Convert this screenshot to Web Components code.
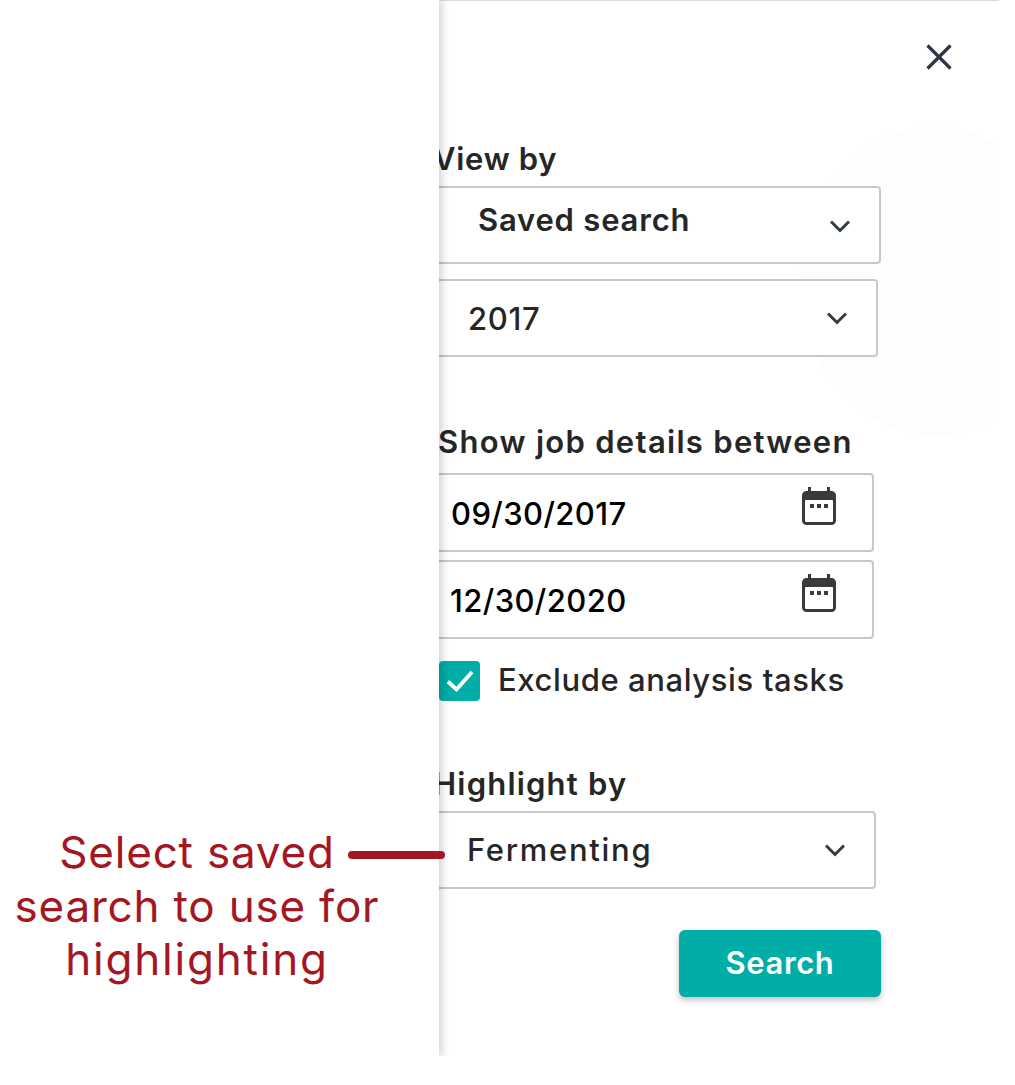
<!DOCTYPE html>
<html>
<head>
<meta charset="utf-8">
<style>
  html, body { margin: 0; padding: 0; background: #fff; }
  body { font-family: Inter, "Liberation Sans", sans-serif; color: #262626; }
</style>
</head>
<body>
<app-shell>
  <callout-panel slot="side"></callout-panel>
  <filter-panel slot="main">
    <field-label style="--gap-top:140px;--ink-left:-6px;--ls:0.7px">View by</field-label>
    <select-box style="--mt:9px;--mr:118px;--pl:37px;--weight:600;--ty:-6px;--cy:1px;--ls:0.8px" value="Saved search"></select-box>
    <select-box style="--mt:15px;--mr:121px;--pl:27px;--weight:500;--ls:0.7px" value="2017"></select-box>
    <field-label style="--gap-top:67px;--ink-left:-1px;--ls:1.3px">Show job details between</field-label>
    <date-box style="--mt:13px" value="09/30/2017"></date-box>
    <date-box style="--mt:8px;--ml:-1px" value="12/30/2020"></date-box>
    <check-row label="Exclude analysis tasks"></check-row>
    <field-label style="--gap-top:65px;--ink-left:-6px;--ls:1.2px">Highlight by</field-label>
    <select-box style="--mt:9px;--mr:123px;--pl:26px;--weight:500;--ty:-1px;--ls:1.7px" value="Fermenting"></select-box>
    <search-button>Search</search-button>
  </filter-panel>
</app-shell>

<script>
  // Chevron used by every dropdown
  const CHEVRON = `<svg width="22" height="14" viewBox="0 0 22 14" fill="none"><path d="M2 2.500 11 11.500 20 2.500" stroke="#333c42" stroke-width="3"/></svg>`;

  // Calendar glyph in the date inputs
  const CALENDAR = `<svg width="34" height="38" viewBox="0 0 34 38"><path fill="#3a3a3a" d="M6 0h3v4h16V0h3v4h1.500A4.500 4.500 0 0 1 34 8.500V33.500A4.500 4.500 0 0 1 29.500 38h-25A4.500 4.500 0 0 1 0 33.500V8.500A4.500 4.500 0 0 1 4.500 4H6z"/><rect x="3" y="13" width="28" height="22" rx="1" fill="#fff"/><rect x="8" y="17" width="4" height="4" fill="#3a3a3a"/><rect x="15" y="17" width="4" height="4" fill="#3a3a3a"/><rect x="22" y="17" width="4" height="4" fill="#3a3a3a"/></svg>`;

  class AppShell extends HTMLElement {
    constructor() {
      super();
      this.attachShadow({ mode: 'open' });
      this.shadowRoot.innerHTML = `
        <style>
          :host { display: flex; width: 999px; height: 1056px; }
          ::slotted([slot="side"]) { flex: 0 0 439px; }
          ::slotted([slot="main"]) { flex: 0 0 560px; }
        </style>
        <slot name="side"></slot>
        <slot name="main"></slot>
      `;
    }
  }

  class CalloutPanel extends HTMLElement {
    constructor() {
      super();
      this.attachShadow({ mode: 'open' });
      this.shadowRoot.innerHTML = `
        <style>
          :host {
            display: block;
            position: relative;
            z-index: 2;
            background: #fff;
            box-shadow: 3px 0 8px rgba(0, 0, 0, 0.18);
          }
          .note {
            position: absolute;
            left: 0;
            top: 826px;
            width: 394px;
            text-align: center;
            font-size: 44px;
            line-height: 53.500px;
            letter-spacing: 0.800px;
            font-weight: 400;
            color: #a41722;
          }
          .note span { letter-spacing: 1.800px; }
          .rule {
            position: absolute;
            left: 348px;
            top: 851px;
            width: 97px;
            height: 8px;
            border-radius: 4px;
            background: #a41722;
          }
        </style>
        <div class="note">Select saved<br>search to use for<br><span>highlighting</span></div>
        <div class="rule"></div>
      `;
    }
  }

  class FilterPanel extends HTMLElement {
    constructor() {
      super();
      this.attachShadow({ mode: 'open' });
      this.shadowRoot.innerHTML = `
        <style>
          :host {
            display: block;
            position: relative;
            overflow: hidden;
            box-sizing: border-box;
            height: 1056px;
            border-top: 1px solid #dcdcdc;
            background: #fff;
          }
          .blob {
            position: absolute;
            right: -70px;
            top: 125px;
            width: 270px;
            height: 310px;
            border-radius: 50%;
            background: #fdfdfd;
          }
          .close {
            position: absolute;
            left: 487px;
            top: 43px;
            width: 26px;
            height: 26px;
          }
          .body { position: relative; display: flex; flex-direction: column; }
        </style>
        <div class="blob"></div>
        <svg class="close" viewBox="0 0 26 26" fill="none"><path d="M1.500 1.500 24.500 24.500M24.500 1.500 1.500 24.500" stroke="#2f3542" stroke-width="3.200"/></svg>
        <div class="body"><slot></slot></div>
      `;
    }
  }

  class FieldLabel extends HTMLElement {
    constructor() {
      super();
      this.attachShadow({ mode: 'open' });
      this.shadowRoot.innerHTML = `
        <style>
          :host {
            display: block;
            margin-top: var(--gap-top, 0);
            margin-left: var(--ink-left, 0);
            font-size: 31px;
            line-height: 36px;
            font-weight: 600;
            letter-spacing: var(--ls, 0.3px);
            color: #262626;
            white-space: nowrap;
          }
        </style>
        <slot></slot>
      `;
    }
  }

  class SelectBox extends HTMLElement {
    constructor() {
      super();
      this.attachShadow({ mode: 'open' });
      this.shadowRoot.innerHTML = `
        <style>
          :host {
            display: block;
            margin-top: var(--mt, 0);
            margin-right: var(--mr, 120px);
            margin-left: -10px;
          }
          .box {
            box-sizing: border-box;
            height: 78px;
            display: flex;
            align-items: center;
            justify-content: space-between;
            padding: 0 0 0 calc(var(--pl, 30px) + 10px);
            border: 2px solid #c9c9c9;
            border-radius: 4px;
            background: #fff;
          }
          .value {
            font-size: 31px;
            font-weight: var(--weight, 500);
            letter-spacing: var(--ls, 0);
            color: #262626;
            transform: translateY(var(--ty, 0));
          }
          .chevron {
            display: flex;
            margin-right: 28px;
            transform: translateY(var(--cy, 0));
          }
        </style>
        <div class="box">
          <span class="value"></span>
          <span class="chevron">${CHEVRON}</span>
        </div>
      `;
      this.shadowRoot.querySelector('.value').textContent = this.getAttribute('value');
    }
  }

  class DateBox extends HTMLElement {
    constructor() {
      super();
      this.attachShadow({ mode: 'open' });
      this.shadowRoot.innerHTML = `
        <style>
          :host {
            display: block;
            margin-top: var(--mt, 0);
            margin-right: 125px;
            margin-left: -10px;
          }
          .box {
            box-sizing: border-box;
            height: 79px;
            display: flex;
            align-items: center;
            justify-content: space-between;
            padding: 0 36px 0 20px;
            border: 2px solid #c9c9c9;
            border-radius: 4px;
            background: #fff;
          }
          .value { font-size: 31px; font-weight: 500; letter-spacing: 0.400px; color: #000; transform: translate(var(--ml, 0), 1px); }
          .icon { display: flex; transform: translateY(-7px); }
        </style>
        <div class="box">
          <span class="value"></span>
          <span class="icon">${CALENDAR}</span>
        </div>
      `;
      this.shadowRoot.querySelector('.value').textContent = this.getAttribute('value');
    }
  }

  class CheckRow extends HTMLElement {
    constructor() {
      super();
      this.attachShadow({ mode: 'open' });
      this.shadowRoot.innerHTML = `
        <style>
          :host {
            display: flex;
            align-items: center;
            gap: 18px;
            margin-top: 22px;
            height: 40px;
          }
          .tick {
            box-sizing: border-box;
            width: 41px;
            height: 40px;
            border-radius: 4px;
            background: #00ada7;
            display: flex;
            align-items: center;
            justify-content: center;
          }
          .text { font-size: 31px; font-weight: 500; letter-spacing: 0.600px; color: #262626; white-space: nowrap; transform: translateY(-2px); }
        </style>
        <span class="tick">
          <svg width="30" height="24" viewBox="0 0 30 24" fill="none"><path d="M3 12.500 11.500 20.500 27 3" stroke="#fff" stroke-width="3.800"/></svg>
        </span>
        <span class="text"></span>
      `;
      this.shadowRoot.querySelector('.text').textContent = this.getAttribute('label');
    }
  }

  class SearchButton extends HTMLElement {
    constructor() {
      super();
      this.attachShadow({ mode: 'open' });
      this.shadowRoot.innerHTML = `
        <style>
          :host {
            display: flex;
            align-items: center;
            justify-content: center;
            box-sizing: border-box;
            align-self: flex-start;
            margin: 41px 0 0 240px;
            width: 202px;
            height: 67px;
            padding-bottom: 2px;
            border-radius: 6px;
            background: #00ada7;
            box-shadow: 0 3px 6px rgba(0, 0, 0, 0.25);
            color: #fff;
            font-size: 31px;
            font-weight: 600;
            letter-spacing: 0.600px;
          }
        </style>
        <slot></slot>
      `;
    }
  }

  customElements.define('app-shell', AppShell);
  customElements.define('callout-panel', CalloutPanel);
  customElements.define('filter-panel', FilterPanel);
  customElements.define('field-label', FieldLabel);
  customElements.define('select-box', SelectBox);
  customElements.define('date-box', DateBox);
  customElements.define('check-row', CheckRow);
  customElements.define('search-button', SearchButton);
</script>
</body>
</html>
